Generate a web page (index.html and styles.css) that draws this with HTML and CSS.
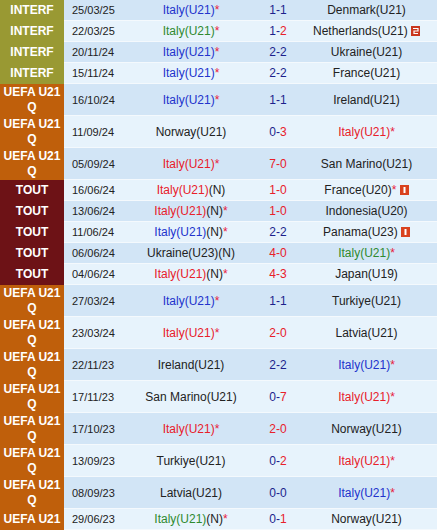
FILE: index.html
```html
<!DOCTYPE html>
<html>
<head>
<meta charset="utf-8">
<link rel="stylesheet" href="styles.css">
</head>
<body>
<table class="matches">
  <colgroup>
    <col class="c-lg"><col class="c-dt"><col class="c-home"><col class="c-sc"><col class="c-away">
  </colgroup>
  <tbody>
    <tr class="odd"><td class="lg interf">INTERF</td><td class="dt">25/03/25</td><td class="tm"><span class="draw">Italy(U21)</span><span class="ast">*</span></td><td class="sc"><span class="b">1-1</span></td><td class="tm">Denmark(U21)</td></tr>
    <tr class="even"><td class="lg interf">INTERF</td><td class="dt">22/03/25</td><td class="tm"><span class="loss">Italy(U21)</span><span class="ast">*</span></td><td class="sc"><span class="b">1-</span><span class="r">2</span></td><td class="tm">Netherlands(U21) <svg class="ico" viewBox="0 0 9 10" width="9" height="10"><rect width="9" height="10" fill="#c9361e"/><path d="M2 2.5h5v2.5h-4v2.5h4" fill="none" stroke="#fff" stroke-width="1.2"/></svg></td></tr>
    <tr class="odd"><td class="lg interf">INTERF</td><td class="dt">20/11/24</td><td class="tm"><span class="draw">Italy(U21)</span><span class="ast">*</span></td><td class="sc"><span class="b">2-2</span></td><td class="tm">Ukraine(U21)</td></tr>
    <tr class="even"><td class="lg interf">INTERF</td><td class="dt">15/11/24</td><td class="tm"><span class="draw">Italy(U21)</span><span class="ast">*</span></td><td class="sc"><span class="b">2-2</span></td><td class="tm">France(U21)</td></tr>
    <tr class="odd"><td class="lg uefa">UEFA U21 Q</td><td class="dt">16/10/24</td><td class="tm"><span class="draw">Italy(U21)</span><span class="ast">*</span></td><td class="sc"><span class="b">1-1</span></td><td class="tm">Ireland(U21)</td></tr>
    <tr class="even"><td class="lg uefa">UEFA U21 Q</td><td class="dt">11/09/24</td><td class="tm">Norway(U21)</td><td class="sc"><span class="b">0-</span><span class="r">3</span></td><td class="tm"><span class="win">Italy(U21)</span><span class="ast">*</span></td></tr>
    <tr class="odd"><td class="lg uefa">UEFA U21 Q</td><td class="dt">05/09/24</td><td class="tm"><span class="win">Italy(U21)</span><span class="ast">*</span></td><td class="sc"><span class="r">7-0</span></td><td class="tm">San Marino(U21)</td></tr>
    <tr class="even"><td class="lg tout">TOUT</td><td class="dt">16/06/24</td><td class="tm"><span class="win">Italy(U21)</span>(N)</td><td class="sc"><span class="r">1-0</span></td><td class="tm">France(U20)<span class="ast">*</span> <svg class="ico" viewBox="0 0 9 10" width="9" height="10"><rect width="9" height="10" fill="#d9421f"/><rect x="3.5" y="2" width="2" height="6" fill="#fff"/></svg></td></tr>
    <tr class="odd"><td class="lg tout">TOUT</td><td class="dt">13/06/24</td><td class="tm"><span class="win">Italy(U21)</span>(N)<span class="ast">*</span></td><td class="sc"><span class="r">1-0</span></td><td class="tm">Indonesia(U20)</td></tr>
    <tr class="even"><td class="lg tout">TOUT</td><td class="dt">11/06/24</td><td class="tm"><span class="draw">Italy(U21)</span>(N)<span class="ast">*</span></td><td class="sc"><span class="b">2-2</span></td><td class="tm">Panama(U23) <svg class="ico" viewBox="0 0 9 10" width="9" height="10"><rect width="9" height="10" fill="#d9421f"/><rect x="3.5" y="2" width="2" height="6" fill="#fff"/></svg></td></tr>
    <tr class="odd"><td class="lg tout">TOUT</td><td class="dt">06/06/24</td><td class="tm">Ukraine(U23)(N)</td><td class="sc"><span class="r">4-0</span></td><td class="tm"><span class="loss">Italy(U21)</span><span class="ast">*</span></td></tr>
    <tr class="even"><td class="lg tout">TOUT</td><td class="dt">04/06/24</td><td class="tm"><span class="win">Italy(U21)</span>(N)<span class="ast">*</span></td><td class="sc"><span class="r">4-3</span></td><td class="tm">Japan(U19)</td></tr>
    <tr class="odd"><td class="lg uefa">UEFA U21 Q</td><td class="dt">27/03/24</td><td class="tm"><span class="draw">Italy(U21)</span><span class="ast">*</span></td><td class="sc"><span class="b">1-1</span></td><td class="tm">Turkiye(U21)</td></tr>
    <tr class="even"><td class="lg uefa">UEFA U21 Q</td><td class="dt">23/03/24</td><td class="tm"><span class="win">Italy(U21)</span><span class="ast">*</span></td><td class="sc"><span class="r">2-0</span></td><td class="tm">Latvia(U21)</td></tr>
    <tr class="odd"><td class="lg uefa">UEFA U21 Q</td><td class="dt">22/11/23</td><td class="tm">Ireland(U21)</td><td class="sc"><span class="b">2-2</span></td><td class="tm"><span class="draw">Italy(U21)</span><span class="ast">*</span></td></tr>
    <tr class="even"><td class="lg uefa">UEFA U21 Q</td><td class="dt">17/11/23</td><td class="tm">San Marino(U21)</td><td class="sc"><span class="b">0-</span><span class="r">7</span></td><td class="tm"><span class="win">Italy(U21)</span><span class="ast">*</span></td></tr>
    <tr class="odd"><td class="lg uefa">UEFA U21 Q</td><td class="dt">17/10/23</td><td class="tm"><span class="win">Italy(U21)</span><span class="ast">*</span></td><td class="sc"><span class="r">2-0</span></td><td class="tm">Norway(U21)</td></tr>
    <tr class="even"><td class="lg uefa">UEFA U21 Q</td><td class="dt">13/09/23</td><td class="tm">Turkiye(U21)</td><td class="sc"><span class="b">0-</span><span class="r">2</span></td><td class="tm"><span class="win">Italy(U21)</span><span class="ast">*</span></td></tr>
    <tr class="odd"><td class="lg uefa">UEFA U21 Q</td><td class="dt">08/09/23</td><td class="tm">Latvia(U21)</td><td class="sc"><span class="b">0-0</span></td><td class="tm"><span class="draw">Italy(U21)</span><span class="ast">*</span></td></tr>
    <tr class="even"><td class="lg uefa">UEFA U21</td><td class="dt">29/06/23</td><td class="tm"><span class="loss">Italy(U21)</span>(N)<span class="ast">*</span></td><td class="sc"><span class="b">0-</span><span class="r">1</span></td><td class="tm">Norway(U21)</td></tr>
  </tbody>
</table>
</body>
</html>
```
FILE: styles.css
```css
html, body {
  margin: 0;
  padding: 0;
  background: #ffffff;
}
body {
  font-family: "Liberation Sans", Arial, sans-serif;
  font-size: 12px;
  color: #222222;
}
.matches {
  width: 437px;
  table-layout: fixed;
  border-collapse: separate;
  border-spacing: 0;
}
.c-lg { width: 64px; }
.c-dt { width: 58px; }
.c-home { width: 138px; }
.c-sc { width: 36px; }
.c-away { width: 141px; }

.matches td {
  padding: 1px 0;
  line-height: 18px;
  border-bottom: 1px solid #f4f9fd;
  text-align: center;
  white-space: nowrap;
  vertical-align: middle;
}
.odd td { background: #d2e5f6; }
.even td { background: #e7f3fc; }

.matches td.lg {
  color: #ffffff;
  font-weight: bold;
  line-height: 15px;
  padding: 1px 2px;
  border-bottom: none;
  white-space: normal;
}
.matches td.interf { background: #999933; }
.matches td.uefa { background: #bf5f0b; }
.matches td.tout { background: #6d1216; }

.matches td.dt {
  font-size: 11px;
  color: #222222;
  text-align: left;
  padding-left: 8px;
}
.matches td.sc { font-size: 12px; }

.draw { color: #2233cc; }
.win { color: #e8202a; }
.loss { color: #2f8a2f; }
.ast { color: #e8203c; }
.b { color: #1c1f8c; }
.r { color: #e8202a; }

.ico {
  vertical-align: -1px;
}
```
